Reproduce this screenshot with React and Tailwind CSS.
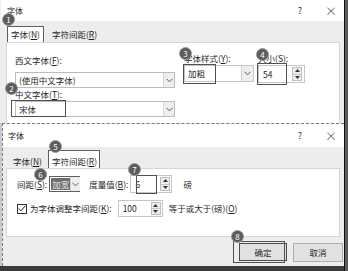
const font = { fontFamily: '"Noto Sans CJK SC", "Noto Sans", sans-serif' };

function U({ children }) {
  return <span className="underline underline-offset-1">{children}</span>;
}

function Chevron() {
  return (
    <svg width="7" height="5" viewBox="0 0 7 5" fill="none">
      <path d="M0.5 0.8L3.5 3.8L6.5 0.8" stroke="#5a5a5a" strokeWidth="1" />
    </svg>
  );
}

function Spinner({ className }) {
  return (
    <div className={`flex flex-col w-[10px] border border-[#bdbdbd] bg-[#ececec] ${className}`}>
      <div className="flex-1 flex items-center justify-center border-b border-[#c8c8c8]">
        <svg width="5" height="3" viewBox="0 0 5 3"><path d="M0 3L2.5 0L5 3Z" fill="#333" /></svg>
      </div>
      <div className="flex-1 flex items-center justify-center">
        <svg width="5" height="3" viewBox="0 0 5 3"><path d="M0 0L2.5 3L5 0Z" fill="#333" /></svg>
      </div>
    </div>
  );
}

function Select({ text, className }) {
  return (
    <div className={`h-[16px] bg-white border border-[#bcbcbc] flex items-center ${className}`}>
      <span className="flex-1 pl-[3px] leading-none">{text}</span>
      <span className="w-[11px] h-[14px] bg-[#eeeeee] border-l border-[#d6d6d6] flex items-center justify-center">
        <Chevron />
      </span>
    </div>
  );
}

function Badge({ n, className }) {
  return (
    <div
      className={`absolute w-[13px] h-[13px] rounded-full bg-[#5c5c5c] border border-[#9a9a9a] text-white text-[8px] leading-none flex items-center justify-center ${className}`}
    >
      {n}
    </div>
  );
}

function TitleBar({ h }) {
  return (
    <div className={`bg-white flex items-center justify-between pl-[5px] pr-[7px] ${h}`}>
      <span className="text-[8px] text-[#222]">字体</span>
      <div className="flex items-center gap-[20px] text-[#333]">
        <span className="w-[10px] text-center text-[9px]">?</span>
        <span className="w-[12px] text-center text-[12px] font-light leading-none">×</span>
      </div>
    </div>
  );
}

export default function App() {
  return (
    <div className="relative w-[348px] h-[271px] overflow-hidden flex bg-[#3a3a3a] text-[8.5px] text-[#1f1f1f]" style={font}>
      <div className="w-[344px] flex flex-col">
        {/* top dialog */}
        <div className="h-[123px] flex flex-col bg-[#ededed] pl-[1px]">
          <div className="h-[21px] bg-white flex items-center justify-between pl-[6px] pr-[7px]">
            <span className="text-[8px]">字体</span>
            <div className="flex items-center gap-[20px] text-[#333]">
              <span className="w-[10px] text-center text-[9px]">?</span>
              <span className="w-[12px] text-center text-[12px] font-light leading-none">×</span>
            </div>
          </div>
          <div className="flex items-end pt-[5px] pl-[6px] h-[21px]">
            <div className="h-[16px] px-[3px] bg-white border border-b-0 border-[#5e5e5e] flex items-center">
              字体(<U>N</U>)
            </div>
            <div className="h-[16px] ml-[6px] px-[2px] flex items-center">
              字符间距(<U>R</U>)
            </div>
          </div>
          <div className="ml-[5px] w-[334px] flex-1 bg-white border border-b-0 border-[#d6d6d6] pl-[8px]">
            <div className="flex items-start">
              <div className="w-[160px] pt-[11px] flex flex-col">
                <span className="leading-[12px]">西文字体(<U>F</U>):</span>
                <Select text="(使用中文字体)" className="mt-[6px] w-[160px]" />
              </div>
              <div className="w-[70px] ml-[9px] pt-[9px] flex flex-col">
                <span className="leading-[12px]">字体样式(<U>Y</U>):</span>
                <div className="mt-[1px] h-[17px] flex items-center bg-white border border-[#c6c6c6]">
                  <span className="flex-1 pl-[3px] leading-none">加粗</span>
                  <span className="w-[12px] h-[15px] bg-[#eeeeee] border-l border-[#d0d0d0] flex items-center justify-center">
                    <Chevron />
                  </span>
                </div>
              </div>
              <div className="ml-[4px] pt-[9px] flex flex-col">
                <span className="leading-[12px]">大小(<U>S</U>):</span>
                <div className="mt-[1px] w-[47px] h-[18px] flex items-center bg-white border border-[#c6c6c6]">
                  <span className="flex-1 pl-[4px] leading-none">54</span>
                  <Spinner className="h-[14px] mr-[2px]" />
                </div>
              </div>
            </div>
            <div className="flex flex-col w-[160px]">
              <span className="leading-[12px]">中文字体(<U>T</U>):</span>
              <Select text="宋体" className="mt-[1px] w-[160px]" />
            </div>
          </div>
        </div>

        {/* bottom dialog */}
        <div className="h-[143px] flex bg-[#c9c9c9]">
          <div className="ml-[2px] flex-1 flex flex-col bg-[#ededed] border-l border-t border-dashed border-[#7c7c7c]">
            <TitleBar h="h-[23px]" />
            <div className="flex items-end pt-[3px] pl-[8px] h-[21px]">
              <div className="h-[14px] px-[2px] flex items-end pb-[1px] leading-[12px]">
                字体(<U>N</U>)
              </div>
              <div className="h-[18px] ml-[4px] w-[52px] pl-[3px] bg-white border border-b-0 border-[#5e5e5e] flex items-end pb-[1px] leading-[12px]">
                字符间距(<U>R</U>)
              </div>
            </div>
            <div className="ml-[3px] w-[334px] h-[69px] bg-white border border-[#d6d6d6] pl-[10px] pt-[6px]">
              <div className="flex items-center h-[18px] whitespace-nowrap">
                <span>间距(<U>S</U>):</span>
                <div className="ml-[2px] w-[31px] shrink-0 h-[16px] flex items-center bg-white border border-[#5e5e5e]">
                  <span className="ml-[1px] px-[1px] bg-[#6e6e6e] text-[#e8e8e8] leading-[12px] whitespace-nowrap">加宽</span>
                  <span className="ml-auto w-[10px] h-[14px] shrink-0 bg-[#eeeeee] border-l border-[#d0d0d0] flex items-center justify-center">
                    <Chevron />
                  </span>
                </div>
                <span className="ml-[9px]">度量值(<U>B</U>):</span>
                <div className="ml-[2px] w-[42px] h-[18px] flex items-center bg-white border border-[#c6c6c6]">
                  <span className="flex-1 pl-[4px] leading-none">6</span>
                  <Spinner className="h-[14px] mr-[1px]" />
                </div>
                <span className="ml-[11px]">磅</span>
              </div>
              <div className="flex items-center h-[17px] mt-[7px] whitespace-nowrap">
                <span className="w-[10px] h-[10px] border border-[#333] flex items-center justify-center">
                  <svg width="8" height="7" viewBox="0 0 8 7" fill="none">
                    <path d="M0.8 3.5L3 5.8L7.2 0.8" stroke="#222" strokeWidth="1" />
                  </svg>
                </span>
                <span className="ml-[3px]">为字体调整字间距(<U>K</U>):</span>
                <div className="ml-[6px] w-[45px] h-[17px] flex items-center bg-white border border-[#c6c6c6]">
                  <span className="flex-1 pl-[4px] leading-none">100</span>
                  <Spinner className="h-[13px] mr-[1px]" />
                </div>
                <span className="ml-[6px]">等于或大于(磅)(<U>O</U>)</span>
              </div>
            </div>
            <div className="flex justify-end gap-[6px] pr-[1px] mt-[6px]">
              <div className="w-[48px] h-[18px] bg-[#e1e1e1] border border-[#4d4d4d] flex items-center justify-center">
                确定
              </div>
              <div className="w-[50px] h-[19px] bg-[#e1e1e1] border border-[#adadad] flex items-center justify-center">
                取消
              </div>
            </div>
          </div>
        </div>
        <div className="h-[5px] bg-[#3a3a3a]" />
      </div>
      <div className="w-[4px] border-l border-[#111] bg-[#5a5a5a]" />

      {/* annotation boxes */}
      <div className="absolute left-[11px] top-[100px] w-[55px] h-[17px] border-[1.5px] border-[#505050]" />
      <div className="absolute left-[183px] top-[64px] w-[33px] h-[20px] border-[1.5px] border-[#505050]" />
      <div className="absolute left-[257px] top-[63px] w-[30px] h-[22px] border-[1.5px] border-[#505050]" />
      <div className="absolute left-[136px] top-[175px] w-[21px] h-[19px] border-[1.5px] border-[#505050]" />
      <div className="absolute left-[233px] top-[241px] w-[52px] h-[22px] border-[1.5px] border-[#505050]" />

      <Badge n="1" className="left-[2px] top-[13px]" />
      <Badge n="2" className="left-[5px] top-[82px]" />
      <Badge n="3" className="left-[179px] top-[47px]" />
      <Badge n="4" className="left-[256px] top-[48px]" />
      <Badge n="5" className="left-[49px] top-[140px]" />
      <Badge n="6" className="left-[34px] top-[168px]" />
      <Badge n="7" className="left-[128px] top-[163px]" />
      <Badge n="8" className="left-[231px] top-[230px]" />
    </div>
  );
}
